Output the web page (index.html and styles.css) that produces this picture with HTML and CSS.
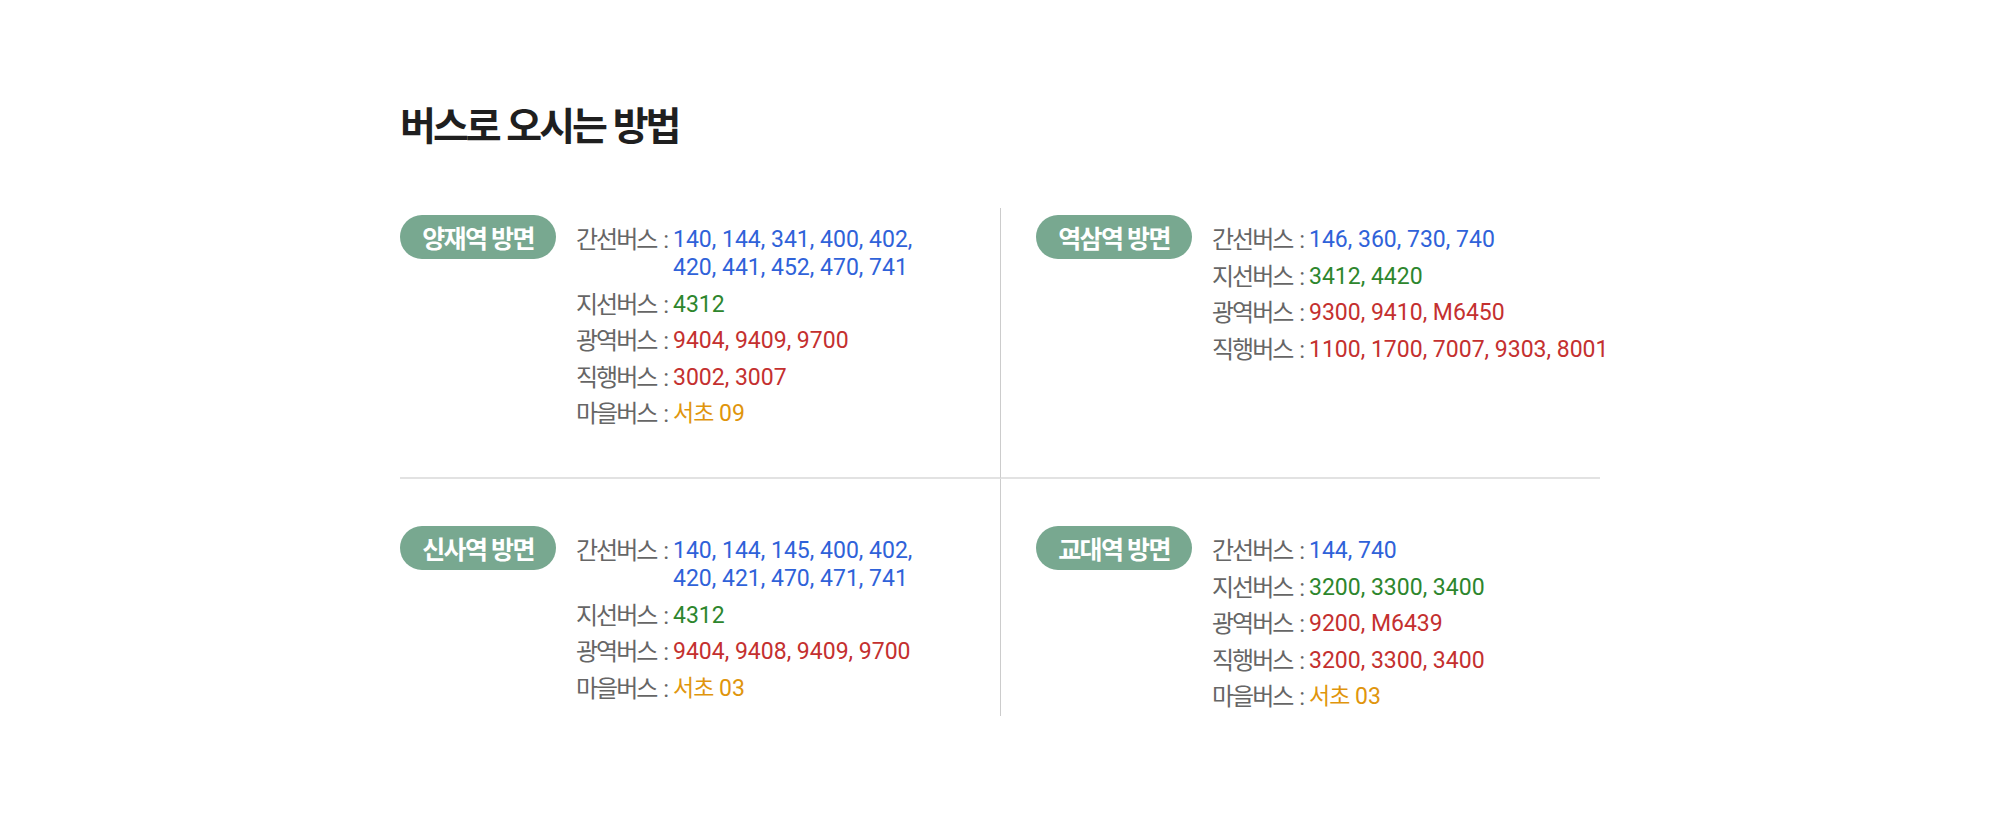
FILE: index.html
```html
<!DOCTYPE html>
<html lang="ko">
<head>
<meta charset="utf-8">
<title>버스로 오시는 방법</title>
<link rel="stylesheet" href="styles.css">
</head>
<body>
<div class="page">
  <h2 class="title">버스로 오시는 방법</h2>
  <div class="grid">
    <section class="cell cell-top">
      <span class="badge">양재역 방면</span>
      <ul class="routes">
        <li><span class="label">간선버스 :</span><span class="nums blue">140, 144, 341, 400, 402, 420, 441, 452, 470, 741</span></li>
        <li><span class="label">지선버스 :</span><span class="nums green">4312</span></li>
        <li><span class="label">광역버스 :</span><span class="nums red">9404, 9409, 9700</span></li>
        <li><span class="label">직행버스 :</span><span class="nums red">3002, 3007</span></li>
        <li><span class="label">마을버스 :</span><span class="nums orange"><span class="ko">서초</span> 09</span></li>
      </ul>
    </section>
    <section class="cell cell-top cell-right">
      <span class="badge">역삼역 방면</span>
      <ul class="routes">
        <li><span class="label">간선버스 :</span><span class="nums blue">146, 360, 730, 740</span></li>
        <li><span class="label">지선버스 :</span><span class="nums green">3412, 4420</span></li>
        <li><span class="label">광역버스 :</span><span class="nums red">9300, 9410, M6450</span></li>
        <li><span class="label">직행버스 :</span><span class="nums red">1100, 1700, 7007, 9303, 8001</span></li>
      </ul>
    </section>
    <section class="cell cell-bottom">
      <span class="badge">신사역 방면</span>
      <ul class="routes">
        <li><span class="label">간선버스 :</span><span class="nums blue">140, 144, 145, 400, 402, 420, 421, 470, 471, 741</span></li>
        <li><span class="label">지선버스 :</span><span class="nums green">4312</span></li>
        <li><span class="label">광역버스 :</span><span class="nums red">9404, 9408, 9409, 9700</span></li>
        <li><span class="label">마을버스 :</span><span class="nums orange"><span class="ko">서초</span> 03</span></li>
      </ul>
    </section>
    <section class="cell cell-bottom cell-right">
      <span class="badge">교대역 방면</span>
      <ul class="routes">
        <li><span class="label">간선버스 :</span><span class="nums blue">144, 740</span></li>
        <li><span class="label">지선버스 :</span><span class="nums green">3200, 3300, 3400</span></li>
        <li><span class="label">광역버스 :</span><span class="nums red">9200, M6439</span></li>
        <li><span class="label">직행버스 :</span><span class="nums red">3200, 3300, 3400</span></li>
        <li><span class="label">마을버스 :</span><span class="nums orange"><span class="ko">서초</span> 03</span></li>
      </ul>
    </section>
  </div>
</div>
</body>
</html>
```
FILE: styles.css
```css
html, body {
  margin: 0;
  padding: 0;
  background: #ffffff;
}

body {
  font-family: Roboto, "Noto Sans CJK KR", sans-serif;
  color: #222222;
}

.page {
  width: 1200px;
  margin: 0 auto;
  padding-top: 105px;
}

.title {
  margin: 0;
  font-size: 39px;
  line-height: 44px;
  font-weight: 700;
  letter-spacing: -3px;
  word-spacing: 1px;
  color: #1f1f1f;
}

.grid {
  margin-top: 59px;
  display: grid;
  grid-template-columns: 600px 600px;
}

.cell {
  display: flex;
  align-items: flex-start;
  gap: 20px;
  padding-right: 60px;
}

.cell-top {
  padding-top: 7px;
  padding-bottom: 49px;
  border-bottom: 2px solid #e2e2e2;
}

.cell-bottom {
  padding-top: 47px;
  padding-bottom: 5px;
}

.cell-right {
  border-left: 1px solid #cccccc;
  padding-left: 35px;
  padding-right: 0;
}

.cell-right .nums {
  white-space: nowrap;
}

.badge {
  flex: none;
  display: flex;
  align-items: center;
  justify-content: center;
  width: 156px;
  height: 44px;
  border-radius: 22px;
  background: #78a890;
  color: #ffffff;
  font-size: 25px;
  font-weight: 700;
  letter-spacing: -1.6px;
}

.routes {
  list-style: none;
  margin: 0;
  padding: 11px 0 0;
  font-size: 23px;
  line-height: 28px;
}

.routes li {
  display: flex;
  align-items: flex-start;
}

.routes li + li {
  margin-top: 8.5px;
}

.label {
  flex: none;
  width: 97px;
  white-space: nowrap;
  color: #666666;
  font-size: 24px;
  letter-spacing: -2px;
  word-spacing: 3px;
}

.ko {
  letter-spacing: -1px;
}

.nums {
  flex: 1;
  min-width: 0;
}

.blue { color: #2f62d9; }
.green { color: #2d862d; }
.red { color: #c4302f; }
.orange { color: #e0950c; }
```
